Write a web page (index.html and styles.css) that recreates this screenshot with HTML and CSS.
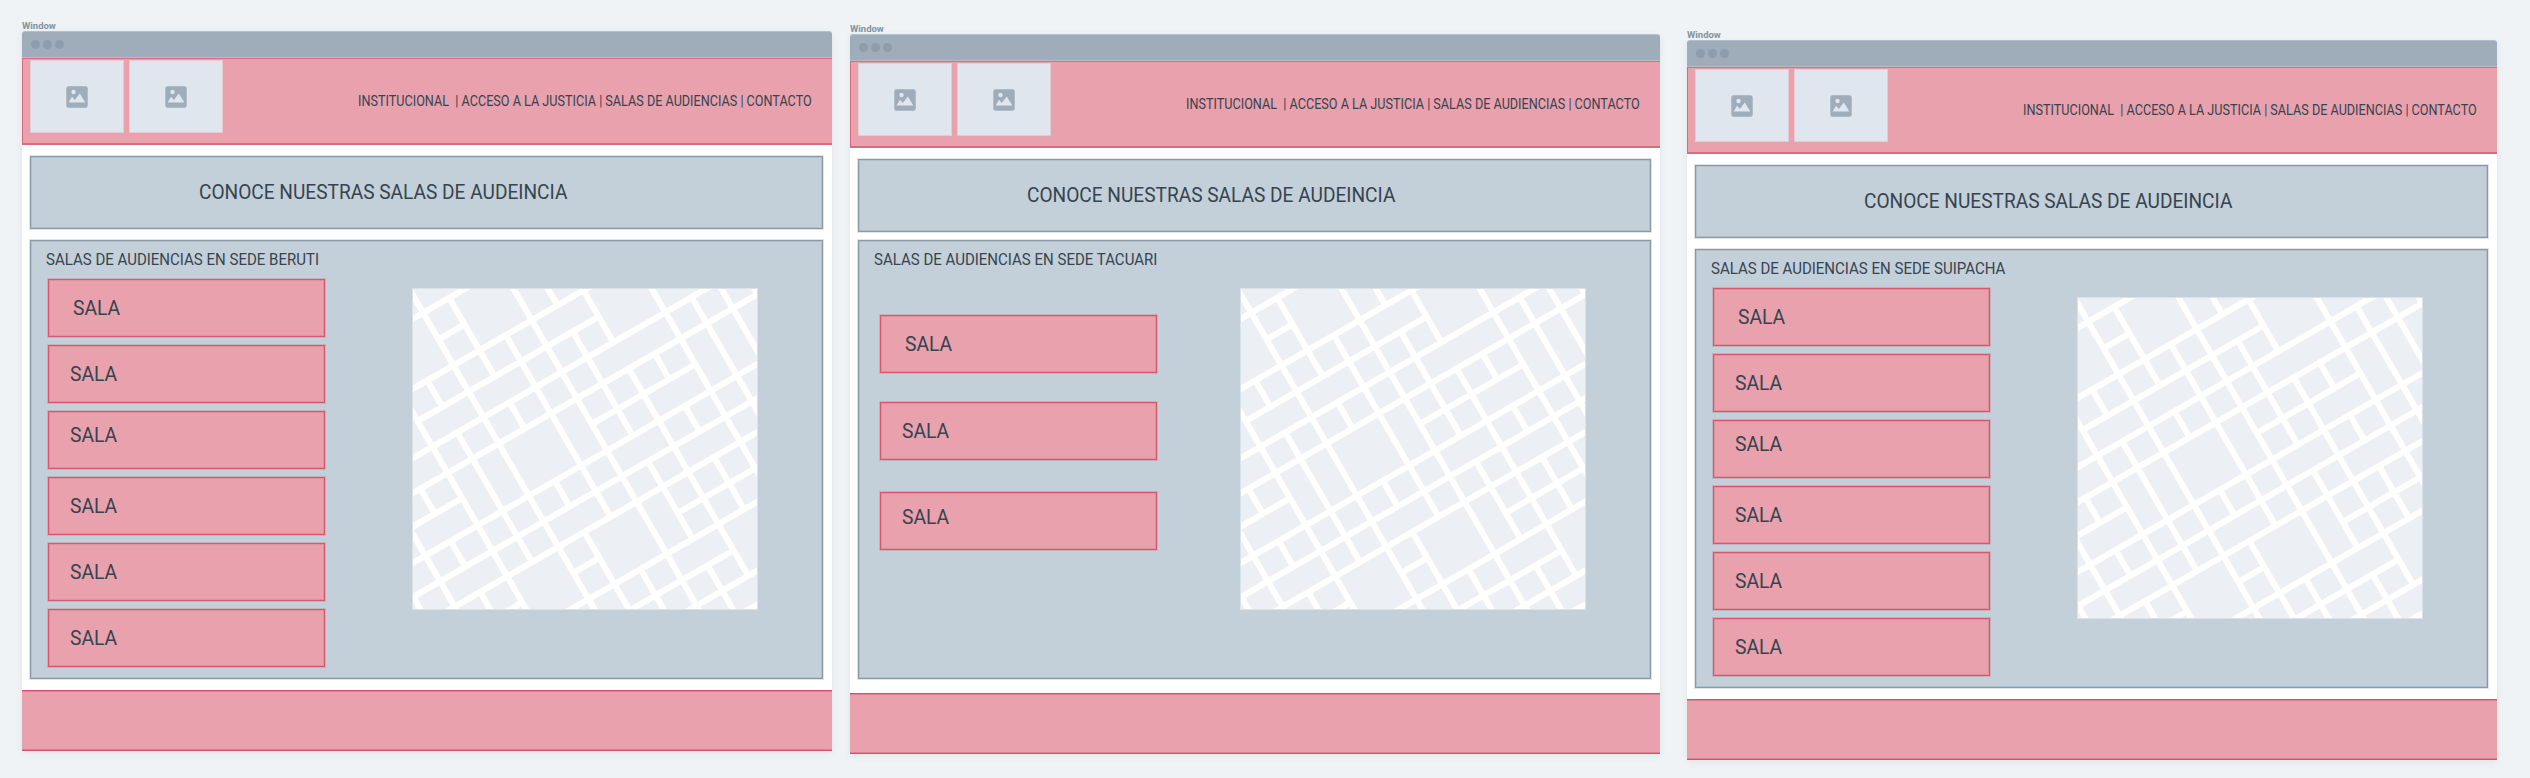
FILE: index.html
```html
<!DOCTYPE html>
<html lang="es">
<head>
<meta charset="utf-8">
<title>Salas de audiencia</title>
<link rel="stylesheet" href="styles.css">
</head>
<body>
<svg class="defs" aria-hidden="true">
  <symbol id="picture" viewBox="0 0 22 22">
    <rect x=".3" y=".3" width="21.4" height="21.4" rx="2.2" fill="#9eadb9"/>
    <circle cx="7.5" cy="6" r="2.2" fill="#dfe6ee"/>
    <path d="M2.6 16.6 6 10.8 8.8 14 13.8 7.6 19.4 16.6Z" fill="#dfe6ee"/>
  </symbol>
  <symbol id="map" viewBox="39 57 1032 960">
    <g transform="matrix(.866 -.5 .5 .866 0 0)" fill="none" stroke="#fff" stroke-width="18">
      <path d="M-200 146H300M-4 238H86M-300 328H520M-181 419H446M-400 508H900M-400 599H1000M-500 686H-181M267 688H626M-500 780H1000M-600 869H1000M-600 957H1000M-4 1047H86M357 1048H1000M-400 1047H-181M-400 1138H1000M-200 1229H446M-100 1317H800M200 1405H800"/>
      <path d="M-4 0V1300M86 146V419M177 328V957M86 508V599M86 780V869M86 957V1300M-95 328V419M-95 508V957M-181 200V1300M-275 599V686M-275 780V869M-275 957V1200M-363 500V1300M-456 869V1300M356 0V328M356 419V780M357 869V1138M176 1138V1400M267 0V1400M446 328V508M446 599V1317M536 599V688M536 780V869M535 957V1138M356 1229V1500M626 0V1200M717 508V1200M807 0V1200M892 400V599"/>
    </g>
  </symbol>
</svg>
<main class="board">

  <section class="frame frame-beruti">
    <p class="frame-name">Window</p>
    <div class="window">
      <div class="titlebar"><i></i><i></i><i></i></div>
      <header class="header">
        <div class="logo"><svg><use href="#picture"/></svg></div>
        <div class="logo"><svg><use href="#picture"/></svg></div>
        <nav class="nav">INSTITUCIONAL&nbsp; | ACCESO A LA JUSTICIA | SALAS DE AUDIENCIAS | CONTACTO</nav>
      </header>
      <div class="banner box"><h1>CONOCE NUESTRAS SALAS DE AUDEINCIA</h1></div>
      <div class="panel box">
        <div class="rooms">
          <h2>SALAS DE AUDIENCIAS EN SEDE BERUTI</h2>
          <div class="room first"><span>SALA</span></div>
          <div class="room"><span>SALA</span></div>
          <div class="room high"><span>SALA</span></div>
          <div class="room"><span>SALA</span></div>
          <div class="room"><span>SALA</span></div>
          <div class="room"><span>SALA</span></div>
        </div>
        <svg class="map"><use href="#map"/></svg>
      </div>
      <footer class="footer"></footer>
    </div>
  </section>

  <section class="frame frame-tacuari">
    <p class="frame-name">Window</p>
    <div class="window">
      <div class="titlebar"><i></i><i></i><i></i></div>
      <header class="header">
        <div class="logo"><svg><use href="#picture"/></svg></div>
        <div class="logo"><svg><use href="#picture"/></svg></div>
        <nav class="nav">INSTITUCIONAL&nbsp; | ACCESO A LA JUSTICIA | SALAS DE AUDIENCIAS | CONTACTO</nav>
      </header>
      <div class="banner box"><h1>CONOCE NUESTRAS SALAS DE AUDEINCIA</h1></div>
      <div class="panel box">
        <div class="rooms">
          <h2>SALAS DE AUDIENCIAS EN SEDE TACUARI</h2>
          <div class="room first"><span>SALA</span></div>
          <div class="room"><span>SALA</span></div>
          <div class="room high"><span>SALA</span></div>
        </div>
        <svg class="map"><use href="#map"/></svg>
      </div>
      <footer class="footer"></footer>
    </div>
  </section>

  <section class="frame frame-suipacha">
    <p class="frame-name">Window</p>
    <div class="window">
      <div class="titlebar"><i></i><i></i><i></i></div>
      <header class="header">
        <div class="logo"><svg><use href="#picture"/></svg></div>
        <div class="logo"><svg><use href="#picture"/></svg></div>
        <nav class="nav">INSTITUCIONAL&nbsp; | ACCESO A LA JUSTICIA | SALAS DE AUDIENCIAS | CONTACTO</nav>
      </header>
      <div class="banner box"><h1>CONOCE NUESTRAS SALAS DE AUDEINCIA</h1></div>
      <div class="panel box">
        <div class="rooms">
          <h2>SALAS DE AUDIENCIAS EN SEDE SUIPACHA</h2>
          <div class="room first"><span>SALA</span></div>
          <div class="room"><span>SALA</span></div>
          <div class="room high"><span>SALA</span></div>
          <div class="room"><span>SALA</span></div>
          <div class="room"><span>SALA</span></div>
          <div class="room"><span>SALA</span></div>
        </div>
        <svg class="map"><use href="#map"/></svg>
      </div>
      <footer class="footer"></footer>
    </div>
  </section>

</main>
</body>
</html>
```
FILE: styles.css
```css
* { box-sizing: border-box; margin: 0; padding: 0; }
body {
  height: 778px;
  overflow: hidden;
  background: #eff3f6;
  color: #36444f;
  font-family: Roboto, "Liberation Sans", sans-serif;
}
.defs { display: block; width: 0; height: 0; }
.board { display: flex; align-items: flex-start; padding-left: 22px; }
.frame { flex: none; width: 810px; }
.frame-beruti { margin-top: 20px; }
.frame-tacuari { margin: 23px 0 0 18px; }
.frame-suipacha { margin: 29px 0 0 27px; }
.frame-name {
  height: 11px;
  font-size: 9.5px;
  line-height: 11px;
  font-weight: 700;
  color: #8192a0;
}
.window {
  display: flex;
  flex-direction: column;
  height: 720px;
  background: #fff;
  border-radius: 3px 3px 0 0;
  box-shadow: 0 2px 6px rgba(90, 110, 120, .1);
}
.titlebar {
  display: flex;
  align-items: center;
  gap: 3px;
  height: 27px;
  padding-left: 9px;
  background: #9eadb9;
  border: 1px solid #b3c0ca;
  border-width: 1px 0;
  border-radius: 3px 3px 0 0;
}
.titlebar i { width: 9px; height: 9px; border-radius: 50%; background: #8d9dab; }
.header {
  display: flex;
  height: 87px;
  padding: 1px 0 0 7px;
  gap: 5px;
  background: #e8a1ad;
  border: solid #da6b7e;
  border-width: 1px 0 2px 1px;
}
.logo {
  flex: none;
  display: flex;
  align-items: center;
  justify-content: center;
  width: 94px;
  height: 73px;
  background: #dfe6ee;
  border: 1px solid #e5c9d3;
}
.logo svg { width: 22px; height: 22px; }
.nav {
  margin: 0 20px 0 auto;
  padding-top: 33px;
  font-size: 14.4px;
  line-height: 18px;
  white-space: pre;
  transform: scaleX(.878);
  transform-origin: right;
}
.box {
  margin: 0 9px 0 8px;
  background: #c3cfd9;
  border: 1px solid #8999a6;
  box-shadow: inset 0 0 0 1px #b1bfca, 0 0 0 1px rgba(137, 153, 166, .25);
}
.banner { height: 73px; margin-top: 11px; padding: 23px 0 0 168px; }
.banner h1 {
  font-size: 20px;
  line-height: 24px;
  font-weight: 400;
  white-space: nowrap;
  transform: scaleX(.955);
  transform-origin: left;
}
.panel { display: flex; height: 439px; margin-top: 11px; }
.frame-tacuari .panel { margin-top: 8px; }
.rooms { display: flex; flex-direction: column; gap: 8px; width: 381px; padding-left: 17px; }
.rooms h2 {
  height: 30px;
  margin-left: -2px;
  padding-top: 9.5px;
  font-size: 15.6px;
  line-height: 18px;
  font-weight: 400;
  white-space: nowrap;
  transform: scaleX(.963);
  transform-origin: left;
}
.room {
  width: 277px;
  height: 58px;
  padding: 16px 0 0 21px;
  background: #e8a1ad;
  border: 1px solid #d9576b;
  box-shadow: inset 0 0 0 1px #e38d9c, 0 0 0 1px rgba(200, 110, 130, .3);
  font-size: 20px;
  line-height: 24px;
}
.room span { display: inline-block; transform: scaleX(.965); transform-origin: left; }
.room.first { padding-left: 24px; }
.room.high { padding-top: 11px; }
.frame-tacuari .rooms { gap: 0; padding-left: 21px; }
.frame-tacuari .rooms h2 { height: 74px; margin-left: -6px; }
.frame-tacuari .room + .room { margin-top: 29px; }
.frame-tacuari .room.high { margin-top: 32px; padding-top: 11.5px; }
.map {
  width: 346px;
  height: 322px;
  margin-top: 47px;
  background: #ecf0f5;
  border: 1px solid #dbe3ea;
}
.footer {
  height: 61px;
  margin-top: auto;
  background: #e8a1ad;
  border: solid #d2536a;
  border-width: 1px 0;
  box-shadow: inset 0 1px #e07f90, inset 0 -1px #e07f90;
}
```
